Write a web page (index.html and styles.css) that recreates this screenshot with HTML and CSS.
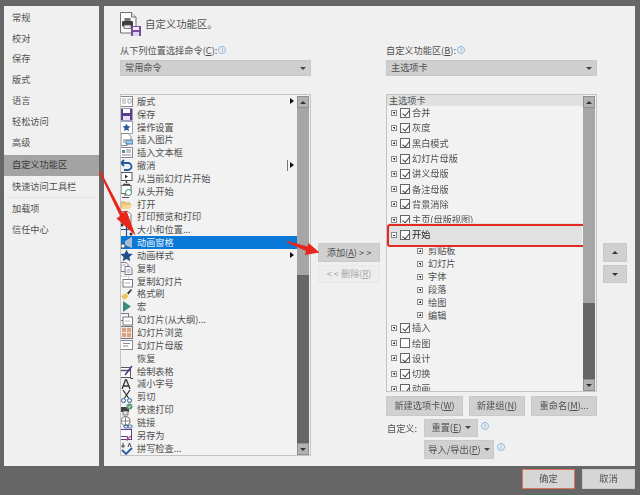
FILE: index.html
```html
<!DOCTYPE html>
<html lang="zh">
<head>
<meta charset="utf-8">
<title>自定义功能区</title>
<link rel="stylesheet" href="styles.css">
</head>
<body>
<div class="dialog">
  <nav class="sidebar">
    <div class="nav-item">常规</div>
    <div class="nav-item">校对</div>
    <div class="nav-item">保存</div>
    <div class="nav-item">版式</div>
    <div class="nav-item">语言</div>
    <div class="nav-item">轻松访问</div>
    <div class="nav-item">高级</div>
    <div class="nav-item nav-active">自定义功能区</div>
    <div class="nav-item">快速访问工具栏</div>
    <div class="nav-sep"></div>
    <div class="nav-item">加载项</div>
    <div class="nav-item">信任中心</div>
  </nav>
  <main class="main">
    <header class="title">
      <svg class="title-icon" viewBox="0 0 21 24"><path d="M.5.5h11l4.500 4.500v16H.5z" fill="#fafafa" stroke="#6f6f6f"/><path d="M11.500.5v4.500H16" fill="#e8e8e8" stroke="#6f6f6f"/><rect x="4.500" y="6" width="6" height="3.500" fill="#777"/><rect x="2" y="9" width="11" height="5.500" rx="1.200" fill="#3f3f3f"/><rect x="4" y="13" width="7" height="3.500" fill="#e8e8e8" stroke="#555" stroke-width=".7"/><rect x="11" y="14" width="10" height="10" fill="#7a4a9c"/><rect x="13" y="15" width="6" height="3" fill="#f4f0f8"/><rect x="13" y="20" width="6" height="4" fill="#e0d6ea"/></svg>
      <span>自定义功能区。</span>
    </header>
    <div class="columns">
      <section class="col col-side">
        <div class="label">从下列位置选择命令(<u>C</u>):<i class="info">i</i></div>
        <div class="select"><span>常用命令</span><b class="caret"></b></div>
        <div class="list list-left">
          <div class="rows">
            <div class="row"><svg class="ico" viewBox="0 0 13 13"><rect x=".5" y="1.500" width="12" height="10" fill="#fff" stroke="#888"/><path d="M2 4h4M2 6h4M2 8h4M8 4h3v4H8z" stroke="#aaa" fill="none"/></svg><span>版式</span><b class="sub"></b></div>
            <div class="row"><svg class="ico" viewBox="0 0 13 13"><rect x=".5" y=".5" width="12" height="12" fill="#5b3f8f"/><rect x="3" y="1" width="7" height="4" fill="#fff"/><rect x="3" y="8" width="7" height="4" fill="#e6e0f0"/></svg><span>保存</span></div>
            <div class="row"><svg class="ico" viewBox="0 0 13 13"><rect x=".5" y=".5" width="12" height="12" fill="#fff" stroke="#9ab"/><path d="M6.500 2.500l1.200 2.600 2.800.3-2.100 1.900.6 2.800-2.500-1.400-2.500 1.400.6-2.800-2.100-1.900 2.800-.3z" fill="#2a5a9a"/></svg><span>操作设置</span></div>
            <div class="row"><svg class="ico" viewBox="0 0 13 13"><path d="M1 .5h7l3 3v4H7v5H1z" fill="#fff" stroke="#888"/><rect x="6" y="7" width="7" height="4" fill="#9cc4e4" stroke="#47a"/><path d="M3 6h3v4H3z" fill="#bbb"/></svg><span>插入图片</span></div>
            <div class="row"><svg class="ico" viewBox="0 0 13 13"><rect x=".5" y="1.500" width="12" height="10" fill="#fff" stroke="#889"/><path d="M2 4h3v3H2z" fill="#58a"/><path d="M6 4h5M6 6h5M2 9h9" stroke="#888"/></svg><span>插入文本框</span></div>
            <div class="row"><svg class="ico" viewBox="0 0 13 13"><path d="M4 1L1 4l3 3M1.500 4H8a3.500 3.500 0 0 1 0 7H4" fill="none" stroke="#1f5a9e" stroke-width="1.800"/></svg><span>撤消</span><em class="split"></em><b class="sub"></b></div>
            <div class="row"><svg class="ico" viewBox="0 0 13 13"><rect x="1" y=".5" width="11" height="8" fill="#fff" stroke="#555"/><path d="M5 2.500l3 2-3 2z" fill="#333"/><path d="M6.500 9v2M3 12.500h7" stroke="#444" stroke-width="1.300"/></svg><span>从当前幻灯片开始</span></div>
            <div class="row"><svg class="ico" viewBox="0 0 13 13"><rect x="1" y=".5" width="10" height="8" fill="#fff" stroke="#666"/><circle cx="8.500" cy="7.500" r="3" fill="#fff" stroke="#3a8a6a"/><path d="M5 9v2M2 12.500h7" stroke="#555"/></svg><span>从头开始</span></div>
            <div class="row"><svg class="ico" viewBox="0 0 13 13"><path d="M1 11V4h4l1 1h4v2" fill="#eecb7e" stroke="#d9b261"/><path d="M1 11l2-4h9l-2 4z" fill="#f4d893"/></svg><span>打开</span></div>
            <div class="row"><svg class="ico" viewBox="0 0 13 13"><path d="M2 .5h6l3 3v9H2z" fill="#fff" stroke="#777"/><circle cx="6" cy="7" r="2" fill="none" stroke="#444"/><path d="M7.500 8.500l2.500 2.500" stroke="#444"/></svg><span>打印预览和打印</span></div>
            <div class="row"><svg class="ico" viewBox="0 0 13 13"><path d="M6.500 0v13M0 6.500h13" stroke="#25508a" stroke-width="1.200"/><circle cx="2" cy="2" r="1.500" fill="#333"/><circle cx="11" cy="11" r="1.500" fill="#333"/></svg><span>大小和位置...</span></div>
            <div class="row row-active"><svg class="ico" viewBox="0 0 13 13"><path d="M5 5l7-4v11L5 9z" fill="#a9bdd0"/><circle cx="3" cy="10" r="2.200" fill="#fff" stroke="#345"/></svg><span>动画窗格</span></div>
            <div class="row"><svg class="ico" viewBox="0 0 13 13"><path d="M6.500 .5l1.800 4 4.400.5-3.300 3 .9 4.300-3.800-2.200-3.800 2.200.9-4.300-3.300-3 4.400-.5z" fill="#1f4f8a"/></svg><span>动画样式</span><b class="sub"></b></div>
            <div class="row"><svg class="ico" viewBox="0 0 13 13"><path d="M1 .5h5l2 2v7H1z" fill="#fff" stroke="#778"/><path d="M5 4.500h5l2 2v6H5z" fill="#fff" stroke="#778"/><path d="M2.500 3h3M6.500 8h4M6.500 10h4" stroke="#99a"/></svg><span>复制</span></div>
            <div class="row"><svg class="ico" viewBox="0 0 13 13"><rect x=".5" y="1.500" width="8" height="6" fill="#fff" stroke="#bbb" stroke-dasharray="1.500 1"/><rect x="3" y="4.500" width="9.500" height="7.500" fill="#fff" stroke="#778"/><path d="M5 8h5" stroke="#aaa"/></svg><span>复制幻灯片</span></div>
            <div class="row"><svg class="ico" viewBox="0 0 13 13"><path d="M1 8l5-3 2.500 3.500L4 12z" fill="#edc25e"/><path d="M7 5l4-4 1 1-3.500 4.500z" fill="#333"/></svg><span>格式刷</span></div>
            <div class="row"><svg class="ico" viewBox="0 0 13 13"><path d="M3 1l8 5.500L3 12z" fill="#3f8a78"/></svg><span>宏</span></div>
            <div class="row"><svg class="ico" viewBox="0 0 13 13"><rect x=".5" y=".5" width="8" height="7" fill="#f8f8f8" stroke="#778"/><rect x="3" y="4" width="9.500" height="8" fill="#fff" stroke="#778"/><path d="M5 8h5" stroke="#bbb"/></svg><span>幻灯片(从大纲)...</span></div>
            <div class="row"><svg class="ico" viewBox="0 0 13 13"><rect x=".5" y=".5" width="12" height="12" fill="#f3e6d8" stroke="#777"/><path d="M2 2h4v4H2zM7 2h4v4H7zM2 7h4v4H2zM7 7h4v4H7z" fill="#d7a586"/></svg><span>幻灯片浏览</span></div>
            <div class="row"><svg class="ico" viewBox="0 0 13 13"><rect x=".5" y="1.500" width="12" height="9" fill="#fff" stroke="#889"/><path d="M3 4.500h7M3 7h5" stroke="#889"/></svg><span>幻灯片母版</span></div>
            <div class="row"><span class="ico"></span><span>恢复</span></div>
            <div class="row"><svg class="ico" viewBox="0 0 13 13"><rect x=".5" y="2.500" width="10" height="10" fill="#fff" stroke="#556"/><path d="M.5 5.500h10" stroke="#556" stroke-width="1.500"/><path d="M5 10l7-9" stroke="#4a3a80" stroke-width="1.500"/></svg><span>绘制表格</span></div>
            <div class="row"><svg class="ico" viewBox="0 0 13 13"><path d="M2 12l3.500-9h1l3.500 9M3.500 9h5" fill="none" stroke="#333" stroke-width="1.300"/><path d="M10.500 1.500h2.500" stroke="#333"/></svg><span>减小字号</span></div>
            <div class="row"><svg class="ico" viewBox="0 0 13 13"><path d="M3 0l5.500 8M10 0L4.500 8" stroke="#333" stroke-width="1.200"/><circle cx="3.500" cy="10.500" r="2" fill="none" stroke="#2a5a9a"/><circle cx="9.500" cy="10.500" r="2" fill="none" stroke="#2a5a9a"/></svg><span>剪切</span></div>
            <div class="row"><svg class="ico" viewBox="0 0 13 13"><rect x="1" y="4" width="8" height="5" fill="#444"/><rect x="3" y="8" width="5" height="4" fill="#ddd" stroke="#444" stroke-width=".6"/><circle cx="9.500" cy="3.500" r="3" fill="#5a9a70"/><path d="M8 3.500l1 1 2-2" stroke="#fff" fill="none"/></svg><span>快速打印</span></div>
            <div class="row"><svg class="ico" viewBox="0 0 13 13"><circle cx="5.500" cy="5" r="4.500" fill="#fff" stroke="#666"/><path d="M1 5h9M5.500.5v9" stroke="#888"/><rect x="4" y="9" width="4" height="3" rx="1.500" fill="none" stroke="#2a5a9a"/><rect x="8" y="9" width="4" height="3" rx="1.500" fill="none" stroke="#2a5a9a"/></svg><span>链接</span></div>
            <div class="row"><svg class="ico" viewBox="0 0 13 13"><rect x=".5" y=".5" width="11" height="10" fill="#fff" stroke="#5b3f8f"/><path d="M.5 7.500h7v4" stroke="#5b3f8f" fill="none"/><path d="M6 11l5-4" stroke="#c04a60" stroke-width="1.200"/></svg><span>另存为</span></div>
            <div class="row"><svg class="ico" viewBox="0 0 13 13"><path d="M1 4h4M3 1v5M8 5l1.500-4L11 5" stroke="#444" fill="none"/><path d="M2 8l4 4 6-6" stroke="#2a5a9a" stroke-width="1.800" fill="none"/></svg><span>拼写检查...</span></div>
            <div class="row"><svg class="ico" viewBox="0 0 13 13"><rect x=".5" y=".5" width="12" height="12" fill="#fff" stroke="#889"/></svg></div>
          </div>
          <div class="scrollbar">
            <div class="sb-btn"><b class="tri-up"></b></div>
            <div class="sb-thumb sb-thumb-left"></div>
            <div class="sb-track"></div>
            <div class="sb-btn"><b class="tri-down"></b></div>
          </div>
        </div>
      </section>
      <section class="col col-mid">
        <button class="btn btn-add">添加(<u>A</u>) &gt; &gt;</button>
        <button class="btn btn-del">&lt; &lt; 删除(<u>R</u>)</button>
      </section>
      <section class="col col-main">
        <div class="label">自定义功能区(<u>B</u>):<i class="info">i</i></div>
        <div class="select"><span>主选项卡</span><b class="caret"></b></div>
        <div class="list list-right">
          <div class="rows">
            <div class="tree-head">主选项卡</div>
            <div class="tree-row"><b class="exp"></b><b class="chk on"></b><span>合并</span></div>
            <div class="tree-row"><b class="exp"></b><b class="chk on"></b><span>灰度</span></div>
            <div class="tree-row"><b class="exp"></b><b class="chk on"></b><span>黑白模式</span></div>
            <div class="tree-row"><b class="exp"></b><b class="chk on"></b><span>幻灯片母版</span></div>
            <div class="tree-row"><b class="exp"></b><b class="chk on"></b><span>讲义母版</span></div>
            <div class="tree-row"><b class="exp"></b><b class="chk on"></b><span>备注母版</span></div>
            <div class="tree-row"><b class="exp"></b><b class="chk on"></b><span>背景消除</span></div>
            <div class="tree-row"><b class="exp"></b><b class="chk on"></b><span>主页(母版视图)</span></div>
            <div class="tree-row tree-hot"><b class="exp exp-open"></b><b class="chk on"></b><span>开始</span></div>
            <div class="tree-groups">
              <div class="group"><b class="exp"></b><span>剪贴板</span></div>
              <div class="group"><b class="exp"></b><span>幻灯片</span></div>
              <div class="group"><b class="exp"></b><span>字体</span></div>
              <div class="group"><b class="exp"></b><span>段落</span></div>
              <div class="group"><b class="exp"></b><span>绘图</span></div>
              <div class="group"><b class="exp"></b><span>编辑</span></div>
            </div>
            <div class="tree-row"><b class="exp"></b><b class="chk on"></b><span>插入</span></div>
            <div class="tree-row"><b class="exp"></b><b class="chk"></b><span>绘图</span></div>
            <div class="tree-row"><b class="exp"></b><b class="chk on"></b><span>设计</span></div>
            <div class="tree-row"><b class="exp"></b><b class="chk on"></b><span>切换</span></div>
            <div class="tree-row"><b class="exp"></b><b class="chk on"></b><span>动画</span></div>
          </div>
          <div class="scrollbar">
            <div class="sb-btn"><b class="tri-up"></b></div>
            <div class="sb-thumb sb-thumb-right"></div>
            <div class="sb-track"></div>
            <div class="sb-btn"><b class="tri-down"></b></div>
          </div>
        </div>
        <div class="btn-row">
          <button class="btn btn-new-tab">新建选项卡(<u>W</u>)</button>
          <button class="btn btn-new-group">新建组(<u>N</u>)</button>
          <button class="btn btn-rename">重命名(<u>M</u>)...</button>
        </div>
        <div class="custom">
          <span class="custom-label">自定义:</span>
          <div class="custom-line"><button class="btn btn-reset">重置(<u>E</u>) <b class="caret caret-dark"></b></button><i class="info">i</i></div>
          <div class="custom-line custom-second"><button class="btn btn-import">导入/导出(<u>P</u>) <b class="caret caret-dark"></b></button><i class="info">i</i></div>
        </div>
      </section>
      <section class="col col-move">
        <button class="btn btn-up"><b class="tri-up"></b></button>
        <button class="btn btn-down"><b class="tri-down"></b></button>
      </section>
    </div>
  </main>
</div>
<footer class="footer">
  <button class="btn btn-ok">确定</button>
  <button class="btn btn-cancel">取消</button>
</footer>
<svg class="marks" viewBox="0 0 640 495">
  <path d="M99 172l1.500-1 22 42 4-2.500 9 25-19-17 3.500-2.500z" fill="#e8261c"/>
  <path d="M287 242.500l.5-1.500 20 5.500 1-3.500 11 9.500-14.500 2.500 1-4z" fill="#e8261c"/>
</svg>
</body>
</html>
```
FILE: styles.css
```css
* { box-sizing: border-box; }
html, body { margin: 0; height: 100%; }
body {
  position: relative;
  width: 640px;
  height: 495px;
  overflow: hidden;
  background: #666;
  color: #505050;
  font-family: "Noto Sans CJK SC", "Noto Sans", sans-serif;
  font-size: 9.2px;
  line-height: 1;
  filter: blur(.3px);
}
button { font: inherit; color: inherit; padding: 0; cursor: default; }
u { text-underline-offset: 1px; }

.dialog { display: flex; gap: 5px; height: 466px; padding: 6px 5px 0 4px; }

.sidebar { width: 95px; height: 460px; padding-top: 1px; background: #f0f0f0; }
.nav-item { display: flex; align-items: center; height: 20.8px; padding-left: 8px; }
.nav-active { height: 21px; margin-top: 2px; margin-bottom: 1px; background: #a3a3a3; color: #3a3a3a; }
.nav-sep { height: 1px; margin: 0 3px; background: #e2e2e2; }

.main { width: 531px; height: 460px; padding: 6px 8px 0 16px; background: #f0f0f0; }
.title { display: flex; align-items: center; gap: 4px; height: 24px; font-size: 10.4px; }
.title-icon { width: 21px; height: 24px; flex: none; }

.columns { display: flex; margin-top: 8px; }
.col-side { width: 191px; }
.col-mid { width: 62px; margin-left: 7px; padding-top: 199px; display: flex; flex-direction: column; gap: 3px; }
.col-main { width: 211px; margin-left: 6px; }
.col-move { width: 24px; margin-left: 6px; padding-top: 199px; display: flex; flex-direction: column; gap: 3px; }

.label { display: flex; align-items: center; height: 14px; }
.info {
  display: inline-flex; align-items: center; justify-content: center;
  width: 8px; height: 8px; margin: -3px 0 0 1px;
  border: 1px solid #8db8e0; border-radius: 50%;
  color: #5a90c8; font-size: 6px; font-style: normal;
}
.select {
  display: flex; align-items: center; justify-content: space-between;
  height: 16px; margin-top: 2px; padding: 0 4px;
  background: #cfcfcf; border: 1px solid #c8c8c8;
}
.caret { width: 0; height: 0; border: 3px solid transparent; border-top: 3px solid #444; border-bottom: 0; }
.caret-dark { display: inline-block; margin: 0 0 1px 3px; }

.list { display: flex; margin-top: 18px; background: #f2f2f2; border: 1px solid #c4c4c4; overflow: hidden; }
.list-left { height: 362px; }
.list-right { height: 298px; }
.rows { flex: 1; min-width: 0; overflow: hidden; }

.row { position: relative; display: flex; align-items: center; gap: 4px; height: 12.85px; white-space: nowrap; }
.ico { flex: none; width: 13px; height: 13px; margin-left: -1px; }
.row-active { background: #0a78d7; color: #e8f2fb; }
.sub {
  position: absolute; left: 169px; top: 3px;
  border: 3px solid transparent; border-left: 4px solid #111; border-right: 0;
}
.split { position: absolute; left: 166px; top: 1px; width: 1px; height: 11px; background: #777; }

.scrollbar { flex: none; width: 12px; margin: 1px 1px 0 0; display: flex; flex-direction: column; }
.sb-btn { display: flex; align-items: center; justify-content: center; height: 12px; flex: none; background: #b2b2b2; border: 1px solid #8f8f8f; }
.sb-thumb { flex: none; background: #a6a6a6; }
.sb-thumb-left { height: 167px; }
.sb-thumb-right { height: 195px; }
.sb-track { flex: 1; background: #666; }
.tri-up, .tri-down { display: block; width: 0; height: 0; border: 3px solid transparent; }
.tri-up { border-top: 0; border-bottom: 3px solid #333; }
.tri-down { border-bottom: 0; border-top: 3px solid #333; }

.tree-head { height: 11px; padding-left: 2px; background: #e0e0e0; line-height: 11px; margin-bottom: -1px; }
.tree-row { position: relative; display: flex; align-items: center; height: 15.300px; padding-left: 4px; white-space: nowrap; }
.exp { position: relative; flex: none; width: 6px; height: 6px; border: 1px solid #8a8a8a; background: #f6f6f6; }
.exp::before { content: ""; position: absolute; left: 1px; top: 1.500px; width: 2px; height: 1px; background: #333; }
.exp::after { content: ""; position: absolute; left: 1.500px; top: 1px; width: 1px; height: 2px; background: #333; }
.exp-open::after { display: none; }
.chk { position: relative; flex: none; width: 10px; height: 10px; margin: 0 2px 0 3px; border: 1px solid #666; background: #fbfbfb; }
.chk.on::after {
  content: ""; position: absolute; left: 2.500px; top: .5px;
  width: 3px; height: 6px; border: solid #444; border-width: 0 1px 1px 0; transform: rotate(40deg);
}
.tree-hot::before { content: ""; position: absolute; left: 1px; right: 1px; top: -4px; bottom: -4px; background: #e2e2e2; }
.tree-hot > * { position: relative; }
.tree-hot { color: #222; }
.tree-hot::after {
  content: ""; position: absolute; left: 0; width: 196px; top: -3.500px; bottom: -4px;
  border: 2px solid #e32a22; border-radius: 3px;
}
.tree-groups { margin: 2px 0 -1.500px; }
.group { display: flex; align-items: center; gap: 5px; height: 12.850px; padding-left: 30px; }

.btn { display: flex; align-items: center; justify-content: center; background: #d0d0d0; border: 1px solid #c9c9c9; white-space: nowrap; }
.btn-add { width: 62px; height: 19px; }
.btn-del { width: 62px; height: 18px; background: #ededed; border-color: #e8e8e8; color: #a8a8a8; }
.btn-up { width: 24px; height: 19px; }
.btn-down { width: 24px; height: 18px; }
.btn-row { display: flex; justify-content: space-between; margin-top: 4px; }
.btn-row .btn { height: 20px; }
.btn-new-tab { width: 77px; }
.btn-new-group { width: 56px; }
.btn-rename { width: 66px; }
.custom { position: relative; margin-top: 3px; padding-left: 38px; }
.custom-label { position: absolute; left: 1px; top: 5px; }
.custom-line { display: flex; align-items: flex-start; gap: 1px; }
.custom-line .info { margin-top: 3px; margin-left: 2px; }
.custom-second { margin-top: 3px; }
.btn-reset { width: 54px; height: 18px; }
.btn-import { width: 70px; height: 19px; }

.footer { display: flex; justify-content: flex-end; gap: 7px; padding: 3px 5px 0 0; }
.btn-ok, .btn-cancel { width: 53px; height: 20px; background: #d6d6d6; }
.btn-ok { border: 1px solid #d8735f; }

.marks { position: absolute; left: 0; top: 0; width: 640px; height: 495px; pointer-events: none; }
```
